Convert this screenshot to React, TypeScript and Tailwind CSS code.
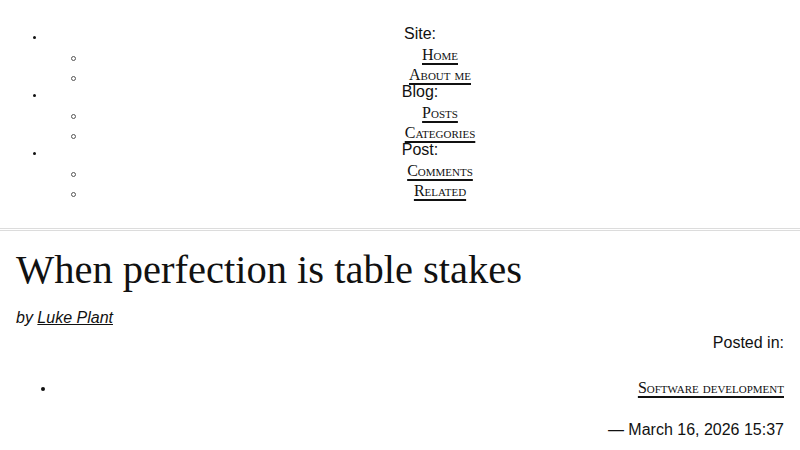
const sans = "font-['Liberation_Sans',Arial,sans-serif]";
const serif = "font-['Liberation_Serif','Times_New_Roman',serif]";

const sections = [
  { label: "Site:", links: ["Home", "About me"] },
  { label: "Blog:", links: ["Posts", "Categories"] },
  { label: "Post:", links: ["Comments", "Related"] },
];

// small disc / circle bullets, drawn with ::before so they sit where the original ones do
const disc =
  "relative before:absolute before:content-[''] before:rounded-full before:bg-[#111]";
const circle =
  "relative before:absolute before:content-[''] before:rounded-full before:border before:border-[#555] before:left-[-9px] before:top-[11px] before:h-[5px] before:w-[5px]";

function NavLink({ children }: { children: string }) {
  return (
    <a
      href="#"
      className={`${serif} text-[16px] text-[#111] [font-variant:small-caps] underline decoration-2 underline-offset-[3px]`}
    >
      {children}
    </a>
  );
}

export default function App() {
  return (
    <div className={`min-h-[450px] bg-white text-[#111] ${sans} text-[16px]`}>
      <nav className="pt-[11px] pb-[11px] border-b-[3px] border-double border-[#dcdcdc]">
        <ul className="my-4 pl-10">
          {sections.map((s) => (
            <li
              key={s.label}
              className={`${disc} before:left-[-7px] before:top-[9px] before:h-[3px] before:w-[3px]`}
            >
              <div className="h-[18px] text-center leading-[14px]">{s.label}</div>
              <ul className="pl-10">
                {s.links.map((l) => (
                  <li key={l} className={`${circle} h-[20px] text-center leading-[20px]`}>
                    <NavLink>{l}</NavLink>
                  </li>
                ))}
              </ul>
            </li>
          ))}
        </ul>
      </nav>

      <main className="px-4">
        <h1 className={`${serif} mt-[15px] text-[40.5px] leading-[48px] font-normal`}>
          When perfection is table stakes
        </h1>
        <div className="mt-[12px] leading-6 italic">
          by{" "}
          <a href="#" className="underline">
            Luke Plant
          </a>
        </div>
        <div className="border-b border-[#dcdcdc] pb-2">
          <div className="mt-[1px] leading-6 text-right">Posted in:</div>
          <ul className="mt-[21px] mb-[18px] pl-10">
            <li
              className={`${disc} h-6 text-right leading-6 before:left-[-15px] before:top-[11px] before:h-[4px] before:w-[4px]`}
            >
              <NavLink>Software development</NavLink>
            </li>
          </ul>
          <div className="leading-6 text-right">— March 16, 2026 15:37</div>
        </div>
      </main>
    </div>
  );
}
